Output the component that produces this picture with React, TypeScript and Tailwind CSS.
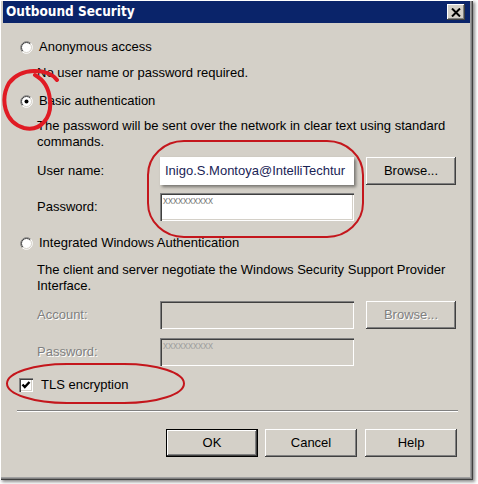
import React from "react";

const sans = "font-['Liberation_Sans',Arial,sans-serif]";
const sunken =
  "shadow-[inset_1px_1px_0_#808080,inset_2px_2px_0_#404040,inset_-1px_-1px_0_#ffffff,inset_-2px_-2px_0_#d4d0c8]";
const raised =
  "shadow-[inset_-1px_-1px_0_#404040,inset_1px_1px_0_#ffffff,inset_-2px_-2px_0_#808080,inset_2px_2px_0_#d4d0c8]";

function Radio({ checked }: { checked?: boolean }) {
  return (
    <svg width="13" height="13" viewBox="0 0 13 13" className="shrink-0">
      <circle cx="6.5" cy="6.5" r="5.5" fill="#fff" />
      <path d="M10.74 2.26 A6 6 0 0 0 2.26 10.74" fill="none" stroke="#808080" strokeWidth="1" />
      <path d="M2.26 10.74 A6 6 0 0 0 10.74 2.26" fill="none" stroke="#ffffff" strokeWidth="1" />
      <path d="M10.04 2.96 A5 5 0 0 0 2.96 10.04" fill="none" stroke="#404040" strokeWidth="1" />
      <path d="M2.96 10.04 A5 5 0 0 0 10.04 2.96" fill="none" stroke="#d4d0c8" strokeWidth="1" />
      {checked && <circle cx="6.5" cy="6.5" r="2" fill="#000" />}
    </svg>
  );
}

function Checkbox() {
  return (
    <div className={`w-[14px] h-[14px] bg-white shrink-0 ${sunken} flex items-center justify-center`}>
      <svg width="14" height="14" viewBox="0 0 14 14">
        <polyline points="3.5,6.5 5.8,9 10.5,4" fill="none" stroke="#000" strokeWidth="2.4" />
      </svg>
    </div>
  );
}

function Button({
  label,
  disabled,
  isDefault,
  className = "",
}: {
  label: string;
  disabled?: boolean;
  isDefault?: boolean;
  className?: string;
}) {
  const text = disabled ? "text-[#808080] [text-shadow:1px_1px_0_#ffffff]" : "text-black";
  if (isDefault) {
    return (
      <div className={`border border-black bg-[#d4d0c8] ${className}`}>
        <div className={`w-full h-full ${raised} flex items-center justify-center ${text}`}>{label}</div>
      </div>
    );
  }
  return (
    <div className={`bg-[#d4d0c8] ${raised} flex items-center justify-center ${text} ${className}`}>
      {label}
    </div>
  );
}

export default function App() {
  return (
    <div className="w-[478px] h-[484px] bg-white relative overflow-hidden">
      <div
        className={`relative w-[473px] h-[480px] bg-[#d4d0c8] ${sans} text-[13px] leading-[16px] text-black pt-[1px] shadow-[inset_1px_1px_0_#ffffff,inset_-1px_-1px_0_#404040,inset_-2px_-2px_0_#808080,inset_-3px_-3px_0_#a0a0a0,2px_2px_3px_rgba(0,0,0,0.45)]`}
      >
        {/* Title bar */}
        <div className="mx-[3px] h-[22px] bg-[#0a246a] flex items-center justify-between pl-[3px] pr-[5px]">
          <span className="font-['DejaVu_Sans_Condensed','DejaVu_Sans',sans-serif] font-bold text-[13.5px] text-white leading-none">
            Outbound Security
          </span>
          <div className={`w-[18px] h-[16px] bg-[#d4d0c8] ${raised} flex items-center justify-center`}>
            <svg width="10" height="9" viewBox="0 0 10 9">
              <path d="M1 0.5 L9 8.5 M9 0.5 L1 8.5" stroke="#000" strokeWidth="2" fill="none" />
            </svg>
          </div>
        </div>

        {/* Anonymous */}
        <div className="mt-[16px] ml-[20px] h-[16px] flex items-center">
          <Radio />
          <span className="ml-[6px]">Anonymous access</span>
        </div>
        <div className="mt-[10px] ml-[37px]">No user name or password required.</div>

        {/* Basic */}
        <div className="mt-[12px] ml-[20px] h-[16px] flex items-center">
          <Radio checked />
          <span className="ml-[6px]">Basic authentication</span>
        </div>
        <div className="mt-[9px] ml-[37px]">
          The password will be sent over the network in clear text using standard
          <br />
          commands.
        </div>

        <div className="mt-[7px] ml-[37px] h-[28px] flex items-center">
          <span className="w-[123px]">User name:</span>
          <div className="w-[194px] h-[28px] bg-white shadow-[2px_2px_3px_rgba(0,0,0,0.45)] flex items-center pl-[5px] text-[#1a2456]">
            Inigo.S.Montoya@IntelliTechtur
          </div>
          <Button label="Browse..." className="ml-[12px] w-[90px] h-[28px]" />
        </div>
        <div className="mt-[8px] ml-[37px] h-[28px] flex items-center">
          <span className="w-[123px]">Password:</span>
          <div className={`w-[194px] h-[28px] bg-white ${sunken} pl-[3px] pt-[3px] text-[10px] leading-[10px] text-[#808080]`}>
            xxxxxxxxxx
          </div>
        </div>

        {/* Integrated */}
        <div className="mt-[14px] ml-[20px] h-[16px] flex items-center">
          <Radio />
          <span className="ml-[6px]">Integrated Windows Authentication</span>
        </div>
        <div className="mt-[11px] ml-[37px]">
          The client and server negotiate the Windows Security Support Provider
          <br />
          Interface.
        </div>

        <div className="mt-[7px] ml-[37px] h-[28px] flex items-center">
          <span className="w-[123px] text-[#808080] [text-shadow:1px_1px_0_#ffffff]">Account:</span>
          <div className={`w-[194px] h-[28px] bg-[#d4d0c8] ${sunken}`} />
          <Button label="Browse..." disabled className="ml-[12px] w-[90px] h-[28px]" />
        </div>
        <div className="mt-[9px] ml-[37px] h-[28px] flex items-center">
          <span className="w-[123px] text-[#808080] [text-shadow:1px_1px_0_#ffffff]">Password:</span>
          <div className={`w-[194px] h-[28px] bg-[#d4d0c8] ${sunken} pl-[3px] pt-[3px] text-[10px] leading-[10px] text-[#a0a0a0]`}>
            xxxxxxxxxx
          </div>
        </div>

        {/* TLS */}
        <div className="mt-[11px] ml-[19px] h-[16px] flex items-center">
          <Checkbox />
          <span className="ml-[8px]">TLS encryption</span>
        </div>

        {/* Separator */}
        <div className="mt-[17px] ml-[17px] w-[441px] border-t border-t-[#808080] border-b border-b-white" />

        {/* Buttons */}
        <div className="mt-[17px] ml-[166px] flex">
          <Button label="OK" isDefault className="w-[92px] h-[28px]" />
          <Button label="Cancel" className="ml-[7px] w-[92px] h-[28px]" />
          <Button label="Help" className="ml-[8px] w-[92px] h-[28px]" />
        </div>

        {/* Red annotations */}
        <svg className="absolute inset-0 pointer-events-none" width="473" height="480" viewBox="0 0 473 480">
          <path
            d="M57 80 C48 68, 21 67, 9 83 C0 99, 4 122, 24 128 C41 132, 52 117, 50 100 C49 88, 44 80, 35 75"
            fill="none"
            stroke="#e01b24"
            strokeWidth="4"
            strokeLinecap="round"
          />
          <rect x="148" y="141" width="215" height="96" rx="36" ry="34" fill="none" stroke="#c4161c" strokeWidth="2" />
          <rect x="7" y="364" width="177" height="39" rx="60" ry="19.5" fill="none" stroke="#c4161c" strokeWidth="2" />
        </svg>
      </div>
    </div>
  );
}
